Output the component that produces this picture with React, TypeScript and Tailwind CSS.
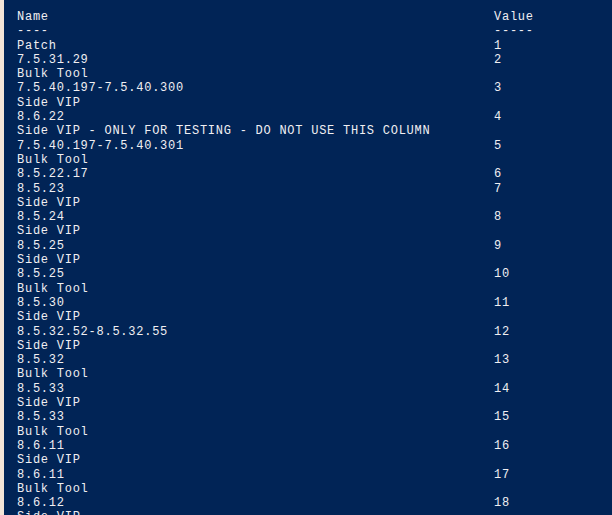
const rows: [string, string][] = [
  ['Name', 'Value'],
  ['----', '-----'],
  ['Patch', '1'],
  ['7.5.31.29', '2'],
  ['Bulk Tool', ''],
  ['7.5.40.197-7.5.40.300', '3'],
  ['Side VIP', ''],
  ['8.6.22', '4'],
  ['Side VIP - ONLY FOR TESTING - DO NOT USE THIS COLUMN', ''],
  ['7.5.40.197-7.5.40.301', '5'],
  ['Bulk Tool', ''],
  ['8.5.22.17', '6'],
  ['8.5.23', '7'],
  ['Side VIP', ''],
  ['8.5.24', '8'],
  ['Side VIP', ''],
  ['8.5.25', '9'],
  ['Side VIP', ''],
  ['8.5.25', '10'],
  ['Bulk Tool', ''],
  ['8.5.30', '11'],
  ['Side VIP', ''],
  ['8.5.32.52-8.5.32.55', '12'],
  ['Side VIP', ''],
  ['8.5.32', '13'],
  ['Bulk Tool', ''],
  ['8.5.33', '14'],
  ['Side VIP', ''],
  ['8.5.33', '15'],
  ['Bulk Tool', ''],
  ['8.6.11', '16'],
  ['Side VIP', ''],
  ['8.6.11', '17'],
  ['Bulk Tool', ''],
  ['8.6.12', '18'],
  ['Side VIP', ''],
];

const App = () => {
  return (
    <div className="flex h-[515px] w-[612px] overflow-hidden bg-[#012456]">
      <div className="w-[4px] shrink-0 bg-[#f4e5d7]"></div>
      <div
        className="flex-1 pl-[13px] pt-[10px] text-[12px] leading-[14.3px] tracking-[0.75px] text-[#f0eff2] whitespace-pre"
        style={{ fontFamily: '"Liberation Mono", "DejaVu Sans Mono", monospace' }}
      >
        {rows.map(([name, value], i) => (
          <div key={i} className="grid grid-cols-[477px_1fr]">
            <span>{name}</span>
            <span>{value}</span>
          </div>
        ))}
      </div>
    </div>
  );
};

export default App;
